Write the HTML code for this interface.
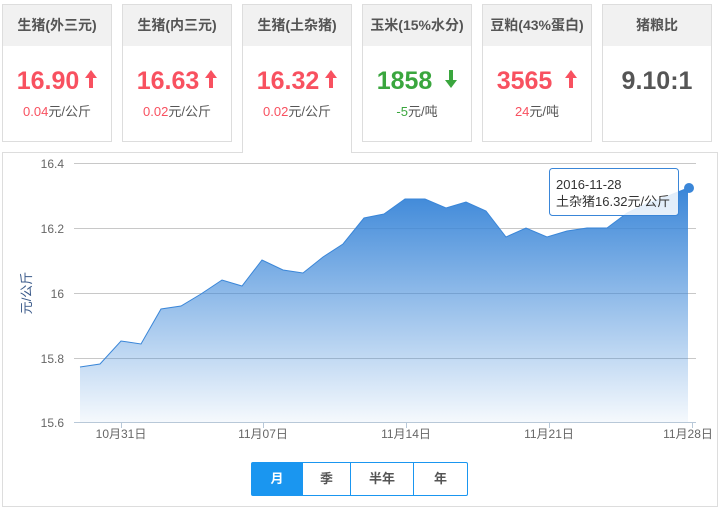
<!DOCTYPE html>
<html><head><meta charset="utf-8"><style>
body{margin:0;width:722px;height:512px;background:#fff;font-family:"Liberation Sans","Noto Sans CJK SC",sans-serif;position:relative;overflow:hidden}
.card{position:absolute;top:4px;width:108px;height:136px;border:1px solid #ddd;background:#fff;text-align:center}
.card.act{height:148px;border-bottom:none;z-index:2}
.hd{height:41px;background:#f1f1f1;line-height:41px;font-size:14px;font-weight:bold;color:#555}
.num{margin-top:20px;font-size:25px;font-weight:bold;line-height:30px;color:#f85160}
.num.g{color:#3aa63e}.num.k{color:#555}
.ar{display:inline-block;vertical-align:middle;margin-left:6px;margin-top:-6px}
.sub{margin-top:5px;font-size:13px;color:#555}
.sub b{font-weight:normal;color:#f85160}.sub b.g{color:#3aa63e}
.panel{position:absolute;left:2px;top:152px;width:714px;height:353px;border:1px solid #ddd;background:#fff;z-index:1}
.btns{position:absolute;left:251px;top:462px;width:215px;height:32px;border:1px solid #1a96f0;border-radius:2px;z-index:3;display:flex;font-size:13px;font-weight:bold;color:#555}
.btns div{line-height:32px;text-align:center;border-left:1px solid #1a96f0}
</style></head><body>
<div class="card" style="left:2px"><div class="hd">生猪(外三元)</div><div class="num">16.90<svg class="ar" width="12" height="18" viewBox="0 0 12 18"><path d="M6 0L12 8H8V18H4V8H0Z" fill="#f85160"/></svg></div><div class="sub"><b>0.04</b>元/公斤</div></div>
<div class="card" style="left:122px"><div class="hd">生猪(内三元)</div><div class="num">16.63<svg class="ar" width="12" height="18" viewBox="0 0 12 18"><path d="M6 0L12 8H8V18H4V8H0Z" fill="#f85160"/></svg></div><div class="sub"><b>0.02</b>元/公斤</div></div>
<div class="card act" style="left:242px"><div class="hd">生猪(土杂猪)</div><div class="num">16.32<svg class="ar" width="12" height="18" viewBox="0 0 12 18"><path d="M6 0L12 8H8V18H4V8H0Z" fill="#f85160"/></svg></div><div class="sub"><b>0.02</b>元/公斤</div></div>
<div class="card" style="left:362px"><div class="hd">玉米(15%水分)</div><div class="num g">1858 <svg class="ar" width="12" height="18" viewBox="0 0 12 18"><path d="M6 18L12 10H8V0H4V10H0Z" fill="#3aa63e"/></svg></div><div class="sub"><b class="g">-5</b>元/吨</div></div>
<div class="card" style="left:482px"><div class="hd">豆粕(43%蛋白)</div><div class="num">3565 <svg class="ar" width="12" height="18" viewBox="0 0 12 18"><path d="M6 0L12 8H8V18H4V8H0Z" fill="#f85160"/></svg></div><div class="sub"><b>24</b>元/吨</div></div>
<div class="card" style="left:602px"><div class="hd">猪粮比</div><div class="num k">9.10:1</div></div>
<div class="panel"></div>
<svg style="position:absolute;left:0;top:0;z-index:2" width="722" height="512">
<defs><linearGradient id="g" x1="0" y1="0" x2="0" y2="1"><stop offset="0" stop-color="#3a86d8"/><stop offset="1" stop-color="#3a86d8" stop-opacity="0.05"/></linearGradient></defs>
<g stroke="#c8c8c8" stroke-width="1"><line x1="74" y1="163.5" x2="696" y2="163.5"/><line x1="74" y1="228.5" x2="696" y2="228.5"/><line x1="74" y1="293.5" x2="696" y2="293.5"/><line x1="74" y1="358.5" x2="696" y2="358.5"/></g>
<path d="M80,367 L100,364 121,341 141,344 161,309 181,306 201,294 222,280 242,286 262,260 283,270 303,273 323,257 343,244 364,218 384,214 405,199 425,199 446,208 466,202 486,211 506,237 526,228 547,237 567,231 587,228 607,228 627,213 648,203 668,196 688,188 L688,422 L80,422Z" fill="url(#g)"/>
<path d="M80,367 L100,364 121,341 141,344 161,309 181,306 201,294 222,280 242,286 262,260 283,270 303,273 323,257 343,244 364,218 384,214 405,199 425,199 446,208 466,202 486,211 506,237 526,228 547,237 567,231 587,228 607,228 627,213 648,203 668,196 688,188" fill="none" stroke="#3a86d8" stroke-width="1"/>
<line x1="74" y1="422.5" x2="696" y2="422.5" stroke="#b8c8d8"/>
<g stroke="#b8c8d8"><line x1="121.5" y1="422" x2="121.5" y2="428"/><line x1="263.5" y1="422" x2="263.5" y2="428"/><line x1="406.5" y1="422" x2="406.5" y2="428"/><line x1="549.5" y1="422" x2="549.5" y2="428"/><line x1="692.5" y1="422" x2="692.5" y2="428"/></g>
<g font-size="12" fill="#666" text-anchor="end" font-family="Liberation Sans"><text x="64" y="168">16.4</text><text x="64" y="233">16.2</text><text x="64" y="298">16</text><text x="64" y="363">15.8</text><text x="64" y="427">15.6</text></g>
<g font-size="12" fill="#666" text-anchor="middle" font-family="Liberation Sans,Noto Sans CJK SC"><text x="121" y="438">10月31日</text><text x="263" y="438">11月07日</text><text x="406" y="438">11月14日</text><text x="549" y="438">11月21日</text><text x="688" y="438">11月28日</text></g>
<text transform="translate(31,293) rotate(-90)" font-size="13" fill="#3b5a8a" text-anchor="middle" font-family="Liberation Sans,Noto Sans CJK SC">元/公斤</text>
<rect x="549.5" y="168.5" width="129" height="47" rx="3" fill="#fff" fill-opacity="0.85" stroke="#3a86d8"/>
<text x="556" y="189" font-size="13" fill="#333" font-family="Liberation Sans">2016-11-28</text>
<text x="556" y="206" font-size="13" fill="#333" font-family="Liberation Sans,Noto Sans CJK SC">土杂猪16.32元/公斤</text>
<circle cx="689" cy="188" r="5" fill="#3a86d8"/>
</svg>
<div class="btns"><div style="width:50px;border-left:none;background:#1a96f0;color:#fff">月</div><div style="width:47px">季</div><div style="width:62px">半年</div><div style="flex:1">年</div></div>
</body></html>
